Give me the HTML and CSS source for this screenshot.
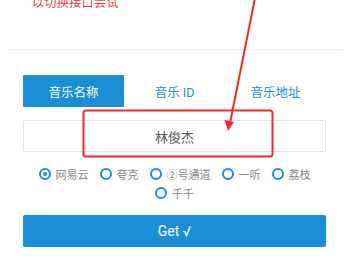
FILE: index.html
```html
<!DOCTYPE html>
<html>
<head>
  <meta charset="UTF-8">
  <title>音乐解析</title>
  <link rel="stylesheet" href="styles.css">
</head>
<body>

  <div class="hint">以切换接口尝试</div>
  <div class="divider"></div>

  <div class="form">
    <div class="tabs">
      <div class="tab active">音乐名称</div>
      <div class="tab">音乐 ID</div>
      <div class="tab">音乐地址</div>
    </div>

    <input class="search" type="text" value="林俊杰">

    <div class="sources">
      <label class="source"><span class="radio checked"></span>网易云</label>
      <label class="source"><span class="radio"></span>夸克</label>
      <label class="source"><span class="radio"></span>②号通道</label>
      <label class="source"><span class="radio"></span>一听</label>
      <label class="source"><span class="radio"></span>荔枝</label>
      <label class="source"><span class="radio"></span>千千</label>
    </div>

    <button class="get-btn">Get √</button>
  </div>

  <!-- 标注 -->
  <svg class="mark" width="350" height="266" viewBox="0 0 350 266">
    <rect x="83.5" y="110.5" width="189" height="46" rx="2.5" fill="none" stroke="#ee2b2b" stroke-width="2"/>
    <line x1="255" y1="-2" x2="230" y2="123" stroke="#ee2b2b" stroke-width="2"/>
    <polygon points="228,131 224.5,120 234,122" fill="#ee2b2b"/>
  </svg>

</body>
</html>
```

FILE: styles.css
```css
body {
  margin: 0;
  font-family: Roboto, "Noto Sans CJK SC", sans-serif;
  background: #fff;
  position: relative;
  width: 350px;
  height: 266px;
  overflow: hidden;
}

.hint {
  margin-top: -5px;
  padding-left: 32px;
  font-size: 12px;
  line-height: 16px;
  color: #f03a3e;
  letter-spacing: 0.4px;
}

.divider {
  margin: 38px 8px 0;
  border-top: 1px solid #f0f0f0;
}

.form {
  padding: 25px 24px 0 23px;
}

.tabs {
  display: flex;
  height: 32px;
}

.tab {
  flex: 1;
  display: flex;
  align-items: center;
  justify-content: center;
  font-size: 12.5px;
  color: #1b8fd6;
}

.tab.active {
  background: #1b8fd6;
  color: #fff;
  border-radius: 1px;
}

.search {
  display: block;
  box-sizing: border-box;
  width: 100%;
  height: 32px;
  margin-top: 13px;
  border: 1px solid #e2e2e2;
  border-radius: 2px;
  text-align: center;
  font-family: "Noto Sans CJK SC", sans-serif;
  font-size: 13px;
  color: #555;
  outline: none;
}

.sources {
  display: flex;
  flex-wrap: wrap;
  justify-content: center;
  column-gap: 11px;
  margin-top: 12px;
}

.source {
  display: flex;
  align-items: center;
  height: 19px;
  font-size: 11px;
  color: #888;
}

.radio {
  box-sizing: border-box;
  width: 12px;
  height: 12px;
  margin-right: 5px;
  border: 2px solid #1b8fd6;
  border-radius: 50%;
  position: relative;
}

.radio.checked::after {
  content: "";
  position: absolute;
  top: 2px;
  left: 2px;
  width: 4px;
  height: 4px;
  border-radius: 50%;
  background: #1b8fd6;
}

.get-btn {
  display: block;
  width: 100%;
  height: 32px;
  margin-top: 13px;
  border: none;
  border-radius: 2px;
  background: #1b8fd6;
  color: #fff;
  font-family: Roboto, sans-serif;
  font-size: 14px;
}

.mark {
  position: absolute;
  top: 0;
  left: 0;
  pointer-events: none;
}
```
